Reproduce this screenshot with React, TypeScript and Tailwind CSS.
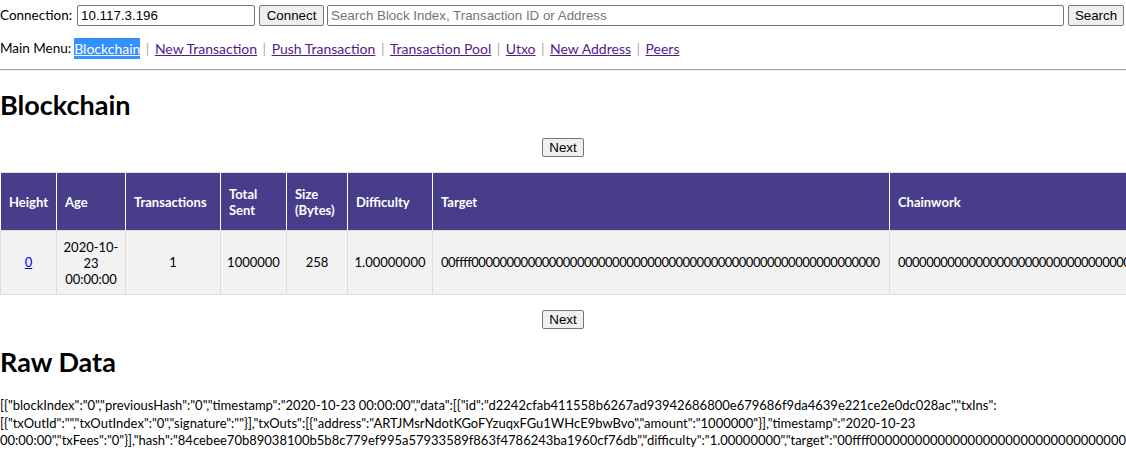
import React from "react";

const body = { fontFamily: "'Trebuchet MS', Lato, 'Noto Sans', sans-serif" };
const arial = { fontFamily: "'Liberation Sans', Arial, sans-serif" };

const rawLines = [
  `[{"blockIndex":"0","previousHash":"0","timestamp":"2020-10-23 00:00:00","data":[{"id":"d2242cfab411558b6267ad93942686800e679686f9da4639e221ce2e0dc028ac","txIns":`,
  `[{"txOutId":"","txOutIndex":"0","signature":""}],"txOuts":[{"address":"ARTJMsrNdotKGoFYzuqxFGu1WHcE9bwBvo","amount":"1000000"}],"timestamp":"2020-10-23`,
  `00:00:00","txFees":"0"}],"hash":"84cebee70b89038100b5b8c779ef995a57933589f863f4786243ba1960cf76db","difficulty":"1.00000000","target":"00ffff0000000000000000000000000000000000000000000000000000000000","chainwork":"0000000000000000000000000000000000000000000000000000000000010001"}]`,
];

const target = "00ffff" + "0".repeat(58);
const chainwork = "0".repeat(59) + "10001";

function NextButton() {
  return (
    <div className="flex justify-center">
      <button
        style={arial}
        className="h-[19px] px-[6px] text-[13.33px] leading-none text-black bg-[#efefef] border border-[#767676] rounded-[2px]"
      >
        Next
      </button>
    </div>
  );
}

export default function App() {
  const menu = ["New Transaction", "Push Transaction", "Transaction Pool", "Utxo", "New Address", "Peers"];
  return (
    <div style={body} className="w-[1126px] h-[453px] overflow-hidden bg-white text-black text-[13px]">
      <div className="flex items-center pt-[5px] h-[26px]">
        <span className="text-[13.5px] mr-[5px]">Connection:</span>
        <input
          style={arial}
          defaultValue="10.117.3.196"
          className="w-[178px] h-[21px] px-[3px] text-[13.33px] border border-[#767676] rounded-[2px] outline-none"
        />
        <button
          style={arial}
          className="ml-[4px] h-[21px] w-[65px] text-[13.33px] bg-[#efefef] border border-[#767676] rounded-[2px]"
        >
          Connect
        </button>
        <input
          style={arial}
          placeholder="Search Block Index, Transaction ID or Address"
          className="ml-[3px] flex-1 h-[21px] px-[3px] text-[13.33px] border border-[#767676] rounded-[2px] outline-none placeholder:text-[#757575]"
        />
        <button
          style={arial}
          className="ml-[4px] mr-[2px] h-[21px] w-[56px] text-[13.33px] bg-[#efefef] border border-[#767676] rounded-[2px]"
        >
          Search
        </button>
      </div>

      <div className="mt-[14px] h-[17px] flex items-center text-[14px] whitespace-nowrap">
        <span className="text-[13.5px] mr-[3px]">Main Menu:</span>
        <a className="underline text-white bg-[#3390ff]">Blockchain</a>
        {menu.map((m) => (
          <React.Fragment key={m}>
            <span className="text-[#a8a8a8] mx-[5.5px]">|</span>
            <a className="underline text-[#551a8b]">{m}</a>
          </React.Fragment>
        ))}
      </div>

      <div className="mt-[12px] border-t border-b border-t-[#a0a0a0] border-b-[#eeeeee]" />

      <h1 className="mt-[19px] text-[27px] font-bold leading-[30px]">Blockchain</h1>

      <div className="mt-[18px]">
        <NextButton />
      </div>

      <table className="mt-[15px] border-collapse table-fixed w-[1800px] text-[13px]">
        <colgroup>
          <col className="w-[56px]" />
          <col className="w-[69px]" />
          <col className="w-[95px]" />
          <col className="w-[66px]" />
          <col className="w-[61px]" />
          <col className="w-[85px]" />
          <col className="w-[457px]" />
          <col className="w-[457px]" />
          <col />
        </colgroup>
        <thead>
          <tr className="bg-[#483d8b] text-white h-[58px]">
            {["Height", "Age", "Transactions", "Total Sent", "Size (Bytes)", "Difficulty", "Target", "Chainwork", "Merkle Root"].map(
              (h) => (
                <th key={h} className="text-left font-bold px-[8px] leading-[16px] border border-[#dddddd] border-l-white border-r-white">
                  {h}
                </th>
              )
            )}
          </tr>
        </thead>
        <tbody>
          <tr className="bg-[#f2f2f2] h-[64px]">
            <td className="text-center px-[4px] border border-[#dddddd]">
              <a className="underline text-[#0000ee]">0</a>
            </td>
            <td className="text-center px-[4px] border border-[#dddddd] leading-[16px] whitespace-nowrap">
              2020-10-
              <br />
              23
              <br />
              00:00:00
            </td>
            <td className="text-center px-[4px] border border-[#dddddd]">1</td>
            <td className="text-center px-[4px] border border-[#dddddd]">1000000</td>
            <td className="text-center px-[4px] border border-[#dddddd]">258</td>
            <td className="text-center px-[4px] border border-[#dddddd]">1.00000000</td>
            <td className="px-[8px] border border-[#dddddd] whitespace-nowrap overflow-hidden tracking-[-0.5px]">{target}</td>
            <td className="px-[8px] border border-[#dddddd] whitespace-nowrap overflow-hidden tracking-[-0.5px]">{chainwork}</td>
            <td className="px-[8px] border border-[#dddddd] whitespace-nowrap overflow-hidden tracking-[-0.5px]">
              84cebee70b89038100b5b8c779ef995a57933589f863f4786243ba1960cf76db
            </td>
          </tr>
        </tbody>
      </table>

      <div className="mt-[15px]">
        <NextButton />
      </div>

      <h1 className="mt-[18px] text-[27px] font-bold leading-[30px]">Raw Data</h1>

      <div className="mt-[20px] text-[13px] leading-[17.5px] whitespace-nowrap">
        {rawLines.map((l, i) => (
          <div key={i}>{l}</div>
        ))}
      </div>
    </div>
  );
}
